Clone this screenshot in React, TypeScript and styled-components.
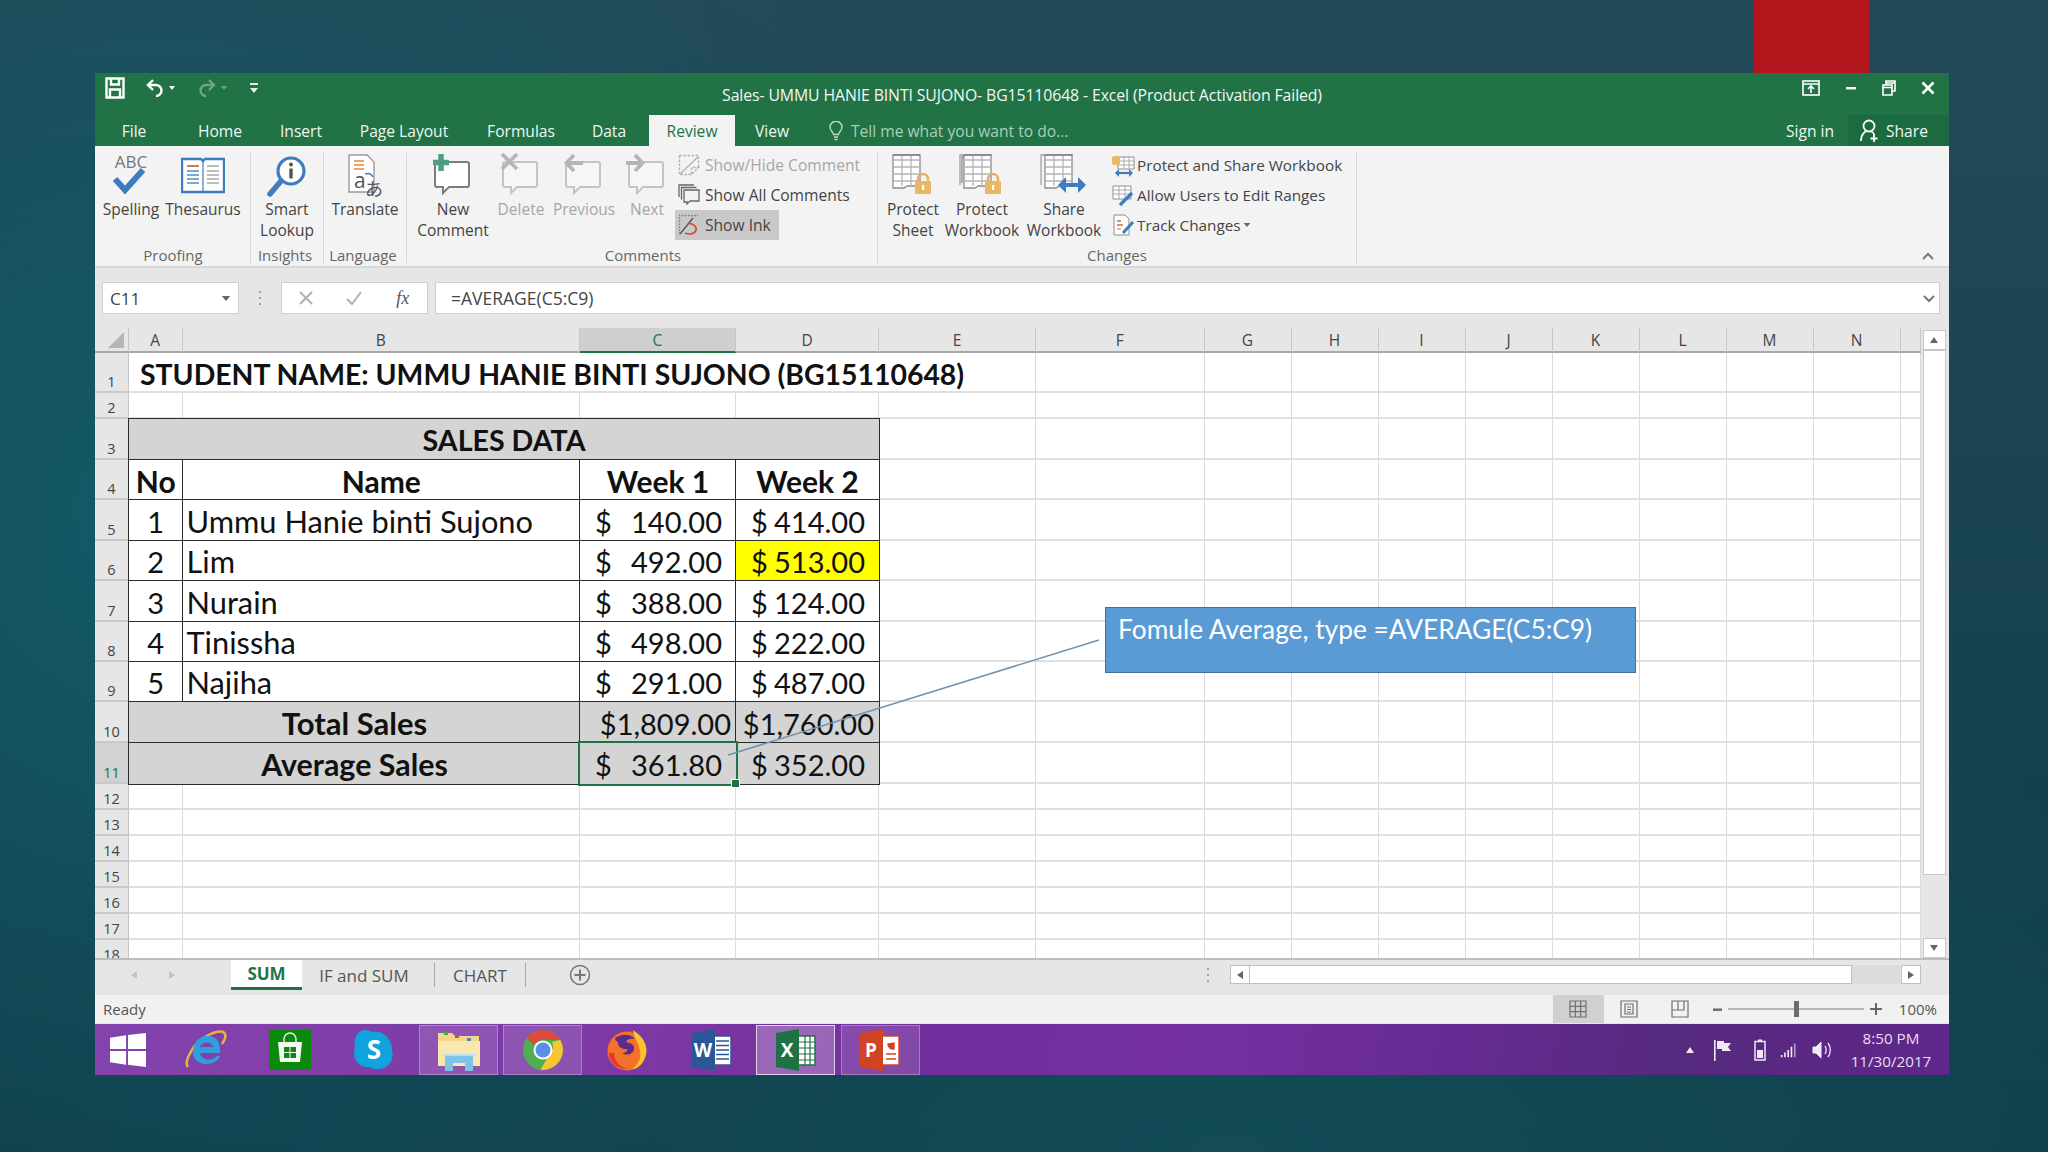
import React from "react";
import styled, { createGlobalStyle } from "styled-components";

const UI_FONT = `"Open Sans", "Noto Sans", sans-serif`;
const SHEET_FONT = `Lato, "Open Sans", sans-serif`;

const GlobalStyle = createGlobalStyle`
  html, body { margin: 0; padding: 0; }
  body {
    width: 2048px;
    height: 1152px;
    overflow: hidden;
    font-family: ${UI_FONT};
    background:
      radial-gradient(ellipse 800px 800px at 8% 45%, #125a66 0%, rgba(18, 90, 102, 0) 100%),
      radial-gradient(ellipse 1200px 500px at 60% 100%, #124c57 0%, rgba(18, 76, 87, 0) 100%),
      linear-gradient(180deg, #234a59 0%, #17424f 55%, #0f3d4a 100%);
  }
`;

const Page = styled.div`
  width: 2048px;
  height: 1152px;
  display: flex;
  flex-direction: column;
`;

const RedBlock = styled.div`
  width: 115px;
  height: 73px;
  margin-left: 1754px;
  background: #b3161c;
  flex: none;
`;

const Window = styled.div`
  width: 1854px;
  height: 1002px;
  margin-left: 95px;
  display: flex;
  flex-direction: column;
  background: #e6e6e6;
  flex: none;
`;

const TitleBar = styled.div`
  height: 42px;
  background: #217346;
  color: #fff;
  display: grid;
  grid-template-columns: 1fr auto 1fr;
  align-items: center;
  flex: none;
`;

const QuickAccess = styled.div`
  display: flex;
  align-items: center;
  gap: 20px;
  padding: 0 0 12px 10px;
`;

const TitleText = styled.div`
  font-size: 15.8px;
  letter-spacing: -0.1px;
  color: #f2f7f4;
  padding-top: 1px;
`;

const WindowControls = styled.div`
  display: flex;
  align-items: center;
  justify-content: flex-end;
  gap: 25px;
  padding: 0 14px 12px 0;
`;

const TabRow = styled.div`
  height: 31px;
  background: #217346;
  display: flex;
  align-items: stretch;
  flex: none;
`;

const Tab = styled.div<{ $w: number; $active?: boolean }>`
  width: ${(p) => p.$w}px;
  display: flex;
  align-items: center;
  justify-content: center;
  font-size: 15.6px;
  color: ${(p) => (p.$active ? "#217346" : "#f0f6f2")};
  background: ${(p) => (p.$active ? "#f3f3f3" : "transparent")};
  flex: none;
`;

const TellMe = styled.div`
  display: flex;
  align-items: center;
  gap: 8px;
  margin-left: 20px;
  font-size: 15.6px;
  color: #a9cfb9;
`;

const SignIn = styled.div`
  margin-left: auto;
  display: flex;
  align-items: center;
  font-size: 15.6px;
  color: #f0f6f2;
  padding-right: 14px;
`;

const ShareTab = styled.div`
  width: 101px;
  display: flex;
  align-items: center;
  gap: 5px;
  padding-left: 11px;
  box-sizing: border-box;
  font-size: 15.6px;
  color: #f0f6f2;
  background: #1c6a3f;
`;

const Ribbon = styled.div`
  height: 122px;
  box-sizing: border-box;
  padding: 7px 0 3px;
  background: #f3f3f3;
  border-bottom: 2px solid #d8d8d8;
  display: flex;
  flex: none;
`;

const Group = styled.div<{ $w: number; $pad?: number }>`
  width: ${(p) => p.$w}px;
  box-sizing: border-box;
  padding-left: ${(p) => p.$pad ?? 0}px;
  border-right: 1px solid #d6d6d6;
  display: flex;
  flex-direction: column;
  flex: none;
`;

const GroupTools = styled.div`
  flex: 1;
  display: flex;
`;

const GroupLabel = styled.div`
  margin-left: -4px;
  text-align: center;
  font-size: 15px;
  line-height: 16px;
  color: #666;
`;

const BigButton = styled.div<{ $w: number; $off?: boolean }>`
  width: ${(p) => p.$w}px;
  flex: none;
  display: flex;
  flex-direction: column;
  align-items: center;
  font-size: 15.5px;
  line-height: 21px;
  text-align: center;
  color: ${(p) => (p.$off ? "#a6a6a6" : "#444")};
  white-space: pre-line;
`;

const IconSlot = styled.div`
  height: 45px;
  display: flex;
  align-items: flex-start;
  justify-content: center;
  margin-bottom: 1px;
`;

const SmallColumn = styled.div`
  display: flex;
  flex-direction: column;
  margin-top: -3px;
`;

const SmallButton = styled.div<{ $off?: boolean; $on?: boolean; $gap?: number; $size?: number }>`
  height: 30px;
  display: flex;
  align-items: center;
  gap: ${(p) => p.$gap ?? 5}px;
  padding: 0 8px 0 3px;
  width: fit-content;
  font-size: ${(p) => p.$size ?? 15.6}px;
  color: ${(p) => (p.$off ? "#a6a6a6" : "#444")};
  background: ${(p) => (p.$on ? "#c9c9c9" : "transparent")};
`;

const Collapse = styled.div`
  margin-left: auto;
  align-self: flex-end;
  padding: 0 15px 2px 0;
  line-height: 0;
`;

const FormulaBar = styled.div`
  height: 60px;
  box-sizing: border-box;
  padding: 14px 9px 0 7px;
  background: #e6e6e6;
  display: flex;
  align-items: flex-start;
  flex: none;
`;

const NameBox = styled.div`
  width: 137px;
  height: 32px;
  box-sizing: border-box;
  background: #fff;
  border: 1px solid #d0d0d0;
  display: flex;
  align-items: center;
  justify-content: space-between;
  padding: 0 7px;
  font-size: 17px;
  color: #444;
`;

const Grip = styled.div`
  width: 42px;
  height: 32px;
  display: flex;
  align-items: center;
  justify-content: center;
`;

const FxBox = styled.div`
  width: 147px;
  height: 32px;
  box-sizing: border-box;
  background: #fff;
  border: 1px solid #d0d0d0;
  margin-right: 7px;
  display: grid;
  grid-template-columns: repeat(3, 1fr);
  align-items: center;
  justify-items: center;
`;

const FxLabel = styled.span`
  font-family: "Liberation Serif", serif;
  font-style: italic;
  font-size: 18px;
  color: #555;
`;

const FormulaInput = styled.div`
  flex: 1;
  height: 32px;
  box-sizing: border-box;
  background: #fff;
  border: 1px solid #d0d0d0;
  display: flex;
  align-items: center;
  justify-content: space-between;
  padding: 0 4px 0 15px;
  font-size: 17.5px;
  color: #444;
`;

const SheetArea = styled.div`
  position: relative;
  height: 630px;
  display: flex;
  flex: none;
  overflow: hidden;
`;

const Sheet = styled.div`
  display: grid;
  grid-template-columns: 34px 53.5px 397.5px 156px 143px 157px 168.5px repeat(8, 87px) 20px;
  grid-template-rows: 25px 40px 26px 41px 40px 41px 40px 41px 40px 40px 41px 41px 26px 26px 26px 26px 26px 26px 26px;
  background: #fff;
  flex: none;
  align-self: flex-start;
`;

const Corner = styled.div`
  background: #e6e6e6;
  border-right: 1px solid #c6c6c6;
  border-bottom: 2px solid #a8a8a8;
  box-sizing: border-box;
  display: flex;
  align-items: flex-end;
  justify-content: flex-end;
  padding: 0 4px 3px 0;
`;

const ColHead = styled.div<{ $on?: boolean }>`
  background: ${(p) => (p.$on ? "#cfcfcf" : "#e6e6e6")};
  border-right: 1px solid #c6c6c6;
  border-bottom: 2px solid ${(p) => (p.$on ? "#217346" : "#a8a8a8")};
  box-sizing: border-box;
  display: flex;
  align-items: center;
  justify-content: center;
  font-size: 15.5px;
  color: ${(p) => (p.$on ? "#217346" : "#444")};
  overflow: hidden;
`;

const RowHead = styled.div<{ $on?: boolean }>`
  background: ${(p) => (p.$on ? "#d2d2d2" : "#e6e6e6")};
  border-right: 1px solid #c6c6c6;
  border-bottom: 2px solid #c9c9c9;
  box-sizing: border-box;
  display: flex;
  align-items: flex-end;
  justify-content: center;
  font-size: 14.5px;
  line-height: 18px;
  color: ${(p) => (p.$on ? "#217346" : "#444")};
  overflow: hidden;
`;

const Cell = styled.div`
  border-right: 1px solid #dadada;
  border-bottom: 2px solid #e0e0e0;
  box-sizing: border-box;
  min-width: 0;
`;

const TitleCell = styled.div`
  grid-column: span 5;
  border-bottom: 2px solid #e0e0e0;
  border-right: 1px solid #dadada;
  box-sizing: border-box;
  padding: 3px 0 0 11px;
  display: flex;
  align-items: center;
  font-family: ${SHEET_FONT};
  font-weight: 700;
  font-size: 28.4px;
  color: #111;
  white-space: nowrap;
`;

const DataCell = styled.div<{
  $span?: number;
  $fill?: string;
  $bold?: boolean;
  $align?: string;
  $indent?: number;
  $size?: number;
}>`
  grid-column: span ${(p) => p.$span ?? 1};
  position: relative;
  z-index: 1;
  box-shadow: 0 0 0 1px #2b2b2b;
  background: ${(p) => p.$fill ?? "#fff"};
  display: flex;
  align-items: center;
  justify-content: ${(p) => p.$align ?? "center"};
  padding-left: ${(p) => p.$indent ?? 0}px;
  padding-top: 1px;
  box-sizing: border-box;
  font-family: ${SHEET_FONT};
  font-weight: ${(p) => (p.$bold ? 700 : 400)};
  font-size: ${(p) => p.$size ?? 30}px;
  color: #111;
  white-space: nowrap;
`;

const Money = styled(DataCell)`
  justify-content: space-between;
  padding: 1px 14px 0 15px;
  font-size: 29px;
`;

const MoneyTotal = styled(DataCell)`
  justify-content: flex-end;
  padding-right: 5px;
  font-size: 29px;
`;

const SelectedCell = styled(Money)`
  z-index: 2;
  box-shadow: 0 0 0 2px #217346;
`;

const FillHandle = styled.div`
  position: absolute;
  right: -4px;
  bottom: -4px;
  width: 7px;
  height: 7px;
  background: #217346;
  border: 1px solid #fff;
`;

const Callout = styled.div`
  position: absolute;
  left: 1010px;
  top: 279px;
  width: 531px;
  height: 66px;
  box-sizing: border-box;
  background: #5b9bd5;
  border: 1px solid #41719c;
  padding: 5px 0 0 12px;
  font-family: ${SHEET_FONT};
  font-size: 26.3px;
  color: #fff;
  z-index: 4;
`;

const Leader = styled.svg`
  position: absolute;
  left: 0;
  top: 0;
  z-index: 3;
  pointer-events: none;
`;

const VScroll = styled.div`
  flex: 1;
  display: flex;
  flex-direction: column;
  padding: 2px 3px 0 2px;
  box-sizing: border-box;
  background: #e6e6e6;
`;

const ScrollButton = styled.div`
  height: 20px;
  background: #fff;
  border: 1px solid #c8c8c8;
  box-sizing: border-box;
  display: flex;
  align-items: center;
  justify-content: center;
  flex: none;
`;

const VThumb = styled.div`
  height: 525px;
  background: #fff;
  border: 1px solid #c8c8c8;
  box-sizing: border-box;
  flex: none;
`;

const VTrack = styled.div`
  flex: 1;
`;

const SheetTabs = styled.div`
  height: 37px;
  background: #e6e6e6;
  border-top: 2px solid #bdbdbd;
  box-sizing: border-box;
  display: flex;
  align-items: stretch;
  flex: none;
`;

const NavArrows = styled.div`
  width: 136px;
  display: flex;
  align-items: center;
  justify-content: center;
  gap: 28px;
  padding: 0 20px 5px 0;
  box-sizing: border-box;
`;

const SheetTab = styled.div<{ $on?: boolean; $w: number; $shift?: number }>`
  width: ${(p) => p.$w}px;
  box-sizing: border-box;
  display: flex;
  align-items: center;
  justify-content: center;
  padding-right: ${(p) => p.$shift ?? 0}px;
  font-size: 17px;
  font-weight: ${(p) => (p.$on ? 700 : 400)};
  color: ${(p) => (p.$on ? "#217346" : "#555")};
  background: ${(p) => (p.$on ? "#fff" : "transparent")};
  border-bottom: ${(p) => (p.$on ? "3px solid #217346" : "0")};
  margin-bottom: 5px;
`;

const TabDivider = styled.div`
  width: 1px;
  margin: 3px 0 8px;
  background: #a8a8a8;
`;

const AddSheet = styled.div`
  margin-left: 43px;
  display: flex;
  align-items: center;
  padding-bottom: 5px;
`;

const HScroll = styled.div`
  margin-left: auto;
  margin-right: 28px;
  display: flex;
  align-items: center;
  padding-bottom: 6px;
`;

const HTrack = styled.div`
  display: flex;
  width: 670px;
  height: 19px;
  margin: 0 1px 0 20px;
  background: #dcdcdc;
`;

const HButton = styled.div`
  width: 20px;
  height: 19px;
  background: #fff;
  border: 1px solid #c0c0c0;
  box-sizing: border-box;
  display: flex;
  align-items: center;
  justify-content: center;
  flex: none;
`;

const HThumb = styled.div`
  width: 602px;
  background: #fff;
  border: 1px solid #c0c0c0;
  border-left: 0;
  box-sizing: border-box;
`;

const StatusBar = styled.div`
  height: 28px;
  background: #f1f1f1;
  display: flex;
  align-items: stretch;
  padding-left: 8px;
  font-size: 15px;
  color: #555;
  flex: none;
`;

const StatusText = styled.div`
  display: flex;
  align-items: center;
`;

const ViewButtons = styled.div`
  margin-left: auto;
  display: flex;
  align-items: stretch;
`;

const ViewButton = styled.div<{ $on?: boolean }>`
  width: 51px;
  display: flex;
  align-items: center;
  justify-content: center;
  background: ${(p) => (p.$on ? "#d0d0d0" : "transparent")};
`;

const Zoomer = styled.div`
  display: flex;
  align-items: center;
  gap: 6px;
  margin-left: 7px;
  padding-right: 12px;
`;

const ZoomSlider = styled.div`
  width: 136px;
  height: 2px;
  background: #b5b5b5;
  position: relative;
`;

const ZoomThumb = styled.div`
  position: absolute;
  left: 66px;
  top: -7px;
  width: 5px;
  height: 16px;
  background: #6b6b6b;
`;

const ZoomText = styled.div`
  margin-left: 11px;
  font-size: 15px;
  color: #555;
`;

const Taskbar = styled.div`
  height: 52px;
  display: flex;
  align-items: stretch;
  gap: 5.3px;
  padding-top: 1px;
  box-sizing: border-box;
  border-top: 1px solid #e9dff0;
  background: linear-gradient(100deg, #8343ac 0%, #7c38a5 30%, #702e9c 45%, #7430a0 60%, #642a90 75%, #552a7e 85%, #5f278a 100%);
  flex: none;
`;

const TaskItem = styled.div<{ $state?: "open" | "active"; $w?: number }>`
  width: ${(p) => p.$w ?? 79}px;
  flex: none;
  display: flex;
  align-items: center;
  justify-content: center;
  box-sizing: border-box;
  background: ${(p) =>
    p.$state === "active"
      ? "rgba(255,255,255,0.26)"
      : p.$state === "open"
        ? "rgba(255,255,255,0.13)"
        : "transparent"};
  border: 1px solid
    ${(p) =>
      p.$state === "active"
        ? "rgba(255,255,255,0.7)"
        : p.$state === "open"
          ? "rgba(255,255,255,0.28)"
          : "transparent"};
`;

const Tray = styled.div`
  margin-left: auto;
  display: flex;
  align-items: center;
  padding-right: 16px;
`;

const TrayIcon = styled.div<{ $w: number }>`
  width: ${(p) => p.$w}px;
  display: flex;
  justify-content: center;
`;

const Clock = styled.div`
  width: 84px;
  text-align: center;
  font-size: 15.2px;
  line-height: 23px;
  color: #e8dff0;
  margin-left: 2px;
`;

/* ---------- icons ---------- */

const BLUE = "#3f7cbf";

const SaveIcon = () => (
  <svg width="20" height="22" viewBox="0 0 20 22" fill="none" stroke="#fff" strokeWidth="2.4">
    <path d="M1.5 1.5h17v19h-17z" />
    <path d="M6 1.5v6h8v-6M5 20.5v-8h10v8" />
  </svg>
);

const UndoIcon = ({ flip, dim }: { flip?: boolean; dim?: boolean }) => (
  <svg width="32" height="20" viewBox="0 0 32 20" fill="none" opacity={dim ? 0.35 : 1}>
    <g transform={flip ? "translate(20,0) scale(-1,1)" : undefined} stroke="#fff" strokeWidth="2.4">
      <path d="M8 2 3 7l5 5" />
      <path d="M3 7h8a5.5 5.5 0 0 1 0 11" />
    </g>
    <path d="M24 8h6l-3 4z" fill="#fff" />
  </svg>
);

const CustomizeIcon = () => (
  <svg width="10" height="14" viewBox="0 0 10 14" fill="#e6f0ea">
    <rect x="1" y="2" width="8" height="2" />
    <path d="M1 7h8l-4 5z" />
  </svg>
);

const RibbonOptionsIcon = () => (
  <svg width="18" height="16" viewBox="0 0 18 16" fill="none" stroke="#fff" strokeWidth="1.6">
    <rect x="1" y="1" width="16" height="14" />
    <path d="M1 4h16M9 13V7M6 9l3-3 3 3" />
  </svg>
);

const MinimizeIcon = () => (
  <svg width="12" height="12" viewBox="0 0 12 12" fill="#fff">
    <rect x="1" y="5" width="10" height="2.4" />
  </svg>
);

const RestoreIcon = () => (
  <svg width="14" height="16" viewBox="0 0 14 16" fill="none" stroke="#fff" strokeWidth="1.6">
    <path d="M1 5h9v10H1zM1 7.5h9M4 5V1h9v10h-3M4 3h9" />
  </svg>
);

const CloseIcon = () => (
  <svg width="14" height="14" viewBox="0 0 14 14" fill="none" stroke="#fff" strokeWidth="2.6">
    <path d="M1.5 1.5l11 11M12.5 1.5l-11 11" />
  </svg>
);

const BulbIcon = () => (
  <svg width="14" height="20" viewBox="0 0 14 20" fill="none" stroke="#bcd9c8" strokeWidth="1.4">
    <path d="M4.5 13.5C4 10.5 1 9.5 1 6.2a6 6 0 0 1 12 0c0 3.3-3 4.3-3.5 7.3zM5 16h4M5.5 18.5h3" />
  </svg>
);

const ShareIcon = () => (
  <svg width="22" height="24" viewBox="0 0 22 24" fill="none" stroke="#fff" strokeWidth="1.8">
    <circle cx="10" cy="7" r="5.5" />
    <path d="M2 22c0-5 2-8 5-10M12 12.500c1.500.5 2.500 1.300 3 2.500M15 15v8M11.500 19.500h7" />
  </svg>
);

const SpellingIcon = () => (
  <svg width="46" height="46" viewBox="0 0 46 46" overflow="visible">
    <text x="23" y="15" textAnchor="middle" fontFamily={UI_FONT} fontSize="17" fill="#777">
      ABC
    </text>
    <path d="M7 26l10 11L35 17" fill="none" stroke={BLUE} strokeWidth="6" />
  </svg>
);

const ThesaurusIcon = () => (
  <svg width="44" height="43" viewBox="0 -3 44 43">
    <path d="M1 3h19l2 2 2-2h19v33H1z" fill="#fff" stroke={BLUE} strokeWidth="2.4" />
    <path d="M22 5v31" stroke={BLUE} strokeWidth="1.2" />
    <path d="M6 10h12" stroke="#d0654a" strokeWidth="1.8" />
    <path d="M6 15h12M6 19h12M6 23h12M6 27h12" stroke="#7ea9d6" strokeWidth="1.8" />
    <path d="M26 10h12M26 15h12M26 19h12M26 23h12M26 27h12" stroke="#a8a8a8" strokeWidth="1.6" />
  </svg>
);

const LookupIcon = () => (
  <svg width="42" height="46" viewBox="0 -2 42 46">
    <circle cx="25" cy="16" r="13" fill="#fff" stroke={BLUE} strokeWidth="3.2" />
    <path d="M15 26 4 39" stroke={BLUE} strokeWidth="5.5" strokeLinecap="round" />
    <circle cx="25" cy="9.5" r="2" fill="#555" />
    <rect x="23.3" y="13.5" width="3.4" height="10" fill="#555" />
  </svg>
);

const TranslateIcon = () => (
  <svg width="44" height="46" viewBox="0 0 44 46" overflow="visible">
    <path d="M6 2h18l7 7v30H6z" fill="#fff" stroke="#9a9a9a" strokeWidth="1.4" />
    <path d="M11 8h10M11 12h10M11 16h10" stroke="#e08a3c" strokeWidth="1.6" />
    <path d="M22 21a6 6 0 0 1 8 3" fill="none" stroke={BLUE} strokeWidth="1.5" />
    <text x="11" y="35" fontFamily={UI_FONT} fontSize="21" fill="#555">
      a
    </text>
    <text x="22" y="43" fontFamily={`"Noto Sans CJK JP", sans-serif`} fontSize="18" fill="#555">
      あ
    </text>
  </svg>
);

const Bubble = ({ dim, white }: { dim?: boolean; white?: boolean }) => (
  <path
    d="M5 9h30a2 2 0 0 1 2 2v21a2 2 0 0 1-2 2H17l-6 6v-6H5a2 2 0 0 1-2-2V11a2 2 0 0 1 2-2z"
    fill={white ? "#fff" : "#f6f6f6"}
    stroke={dim ? "#c4c4c4" : "#7d7d7d"}
    strokeWidth="2"
  />
);

const NewCommentIcon = () => (
  <svg width="42" height="44" viewBox="0 0 42 44">
    <Bubble white />
    <path d="M7 1v17M-1 9.5h16" transform="translate(2,0)" stroke="#4f9e82" strokeWidth="5.5" />
  </svg>
);

const DeleteCommentIcon = () => (
  <svg width="42" height="44" viewBox="0 0 42 44">
    <Bubble dim />
    <path d="M2 1l15 15M17 1 2 16" stroke="#b5b5b5" strokeWidth="3.6" />
  </svg>
);

const PrevCommentIcon = () => (
  <svg width="42" height="44" viewBox="0 0 42 44">
    <Bubble dim />
    <path d="M20 10H5M11 2 3.5 10l7.500 8" fill="none" stroke="#b5b5b5" strokeWidth="3.8" />
  </svg>
);

const NextCommentIcon = () => (
  <svg width="42" height="44" viewBox="0 0 42 44">
    <Bubble dim />
    <path d="M0 10h15M9 2l7.5 8L9 18" fill="none" stroke="#b5b5b5" strokeWidth="3.8" />
  </svg>
);

const ShowHideIcon = () => (
  <svg width="22" height="22" viewBox="0 0 22 22" fill="none" stroke="#b0b0b0" strokeWidth="1.3">
    <path d="M1.5 1.5h19v12M1.5 1.5v19h12l7-7h-7v7" strokeDasharray="2.5 1.5" />
    <path d="M2 20 20 3" />
  </svg>
);

const ShowAllIcon = () => (
  <svg width="22" height="22" viewBox="0 0 22 22" fill="none" stroke="#666" strokeWidth="1.3">
    <path d="M1 13V1h15M3.5 15.5V3.5h15M6 18V6h15v11H12l-3 3v-2z" />
  </svg>
);

const ShowInkIcon = () => (
  <svg width="22" height="22" viewBox="0 0 22 22" fill="none">
    <path d="M1.5 20V1.5H20" stroke="#777" strokeWidth="1.3" strokeDasharray="1.5 1.5" />
    <path d="M2 20 15 4" stroke="#555" strokeWidth="1.3" />
    <path d="M10 9c5 1 9 3 8 7s-7 5-11 3" stroke="#d2492a" strokeWidth="1.6" />
  </svg>
);

const SheetGrid = ({ x = 3 }: { x?: number }) => (
  <g fill="none" stroke="#8c8c8c" strokeWidth="1.3">
    <path d={`M${x} 2h27v31H${x + 14}l-3 2H${x}z`} fill="#fff" />
    <path d={`M${x} 7h27M${x} 14h27M${x} 21h27M${x} 28h27M${x + 9} 2v31M${x + 18} 2v31`} stroke="#b5b5b5" />
    <path d={`M${x} 2h27`} strokeWidth="2" />
  </g>
);

const Lock = ({ x, y }: { x: number; y: number }) => (
  <g transform={`translate(${x},${y})`}>
    <path d="M3 9V6a5 5 0 0 1 10 0v3" fill="none" stroke="#e3b25f" strokeWidth="2.4" />
    <rect x="0" y="8" width="16" height="13" rx="1" fill="#eab766" />
    <rect x="7" y="12" width="2.2" height="5" fill="#fff" />
  </g>
);

const ProtectSheetIcon = () => (
  <svg width="44" height="44" viewBox="0 0 44 44">
    <SheetGrid x={2} />
    <Lock x={24} y={20} />
  </svg>
);

const ProtectWorkbookIcon = () => (
  <svg width="46" height="44" viewBox="0 0 46 44">
    <path d="M3 30V4h3" fill="none" stroke="#8c8c8c" strokeWidth="1.3" />
    <path d="M1 32V2h32" fill="none" stroke="#a0a0a0" strokeWidth="1.3" />
    <SheetGrid x={5} />
    <Lock x={26} y={20} />
  </svg>
);

const ShareWorkbookIcon = () => (
  <svg width="48" height="44" viewBox="0 0 48 44">
    <path d="M1 32V2h32" fill="none" stroke="#a0a0a0" strokeWidth="1.3" />
    <SheetGrid x={5} />
    <path d="M21 32h22" stroke={BLUE} strokeWidth="4" />
    <path d="M26 24l-8 8 8 8zM38 24l8 8-8 8z" fill={BLUE} />
  </svg>
);

const ProtectShareSmall = () => (
  <svg width="24" height="24" viewBox="0 0 24 24" fill="none">
    <path d="M7 4h16v12H7z" fill="#fff" stroke="#8c8c8c" />
    <path d="M7 8h16M7 12h16M13 4v12M18 4v12" stroke="#aaa" />
    <rect x="1" y="3" width="8" height="9" rx="2" fill="#eab766" />
    <path d="M6 20h14" stroke={BLUE} strokeWidth="2.2" />
    <path d="M8 16l-4 4 4 4zM18 16l4 4-4 4z" fill={BLUE} />
  </svg>
);

const AllowEditSmall = () => (
  <svg width="24" height="24" viewBox="0 0 24 24" fill="none">
    <path d="M2 3h18v13H2z" fill="#fff" stroke="#8c8c8c" />
    <path d="M2 7h18M2 11h18M8 3v13M14 3v13" stroke="#aaa" />
    <path d="M21 10 9 22" stroke={BLUE} strokeWidth="3.2" />
  </svg>
);

const TrackSmall = () => (
  <svg width="24" height="24" viewBox="0 0 24 24" fill="none">
    <path d="M3 2h11l4 4v16H3z" fill="#fff" stroke="#8c8c8c" />
    <path d="M6 8h4M6 12h6" stroke="#d0654a" strokeWidth="1.5" />
    <path d="M6 16h4" stroke="#e0a040" strokeWidth="1.5" />
    <path d="M22 9 12 20" stroke={BLUE} strokeWidth="3" />
  </svg>
);

const Caret = ({ color = "#666", size = 6 }: { color?: string; size?: number }) => (
  <svg width={size * 2} height={size} viewBox="0 0 12 6" fill={color}>
    <path d="M1 0h10L6 6z" />
  </svg>
);

const Chevron = ({ up }: { up?: boolean }) => (
  <svg width="12" height="9" viewBox="0 0 12 9" fill="none" stroke="#777" strokeWidth="2">
    <path d={up ? "M1 7l5-5 5 5" : "M1 2l5 5 5-5"} />
  </svg>
);

const Triangle = ({ dir, color = "#666" }: { dir: "up" | "down" | "left" | "right"; color?: string }) => {
  const d = { up: "M1 8h8L5 2z", down: "M1 2h8L5 8z", left: "M8 1v8L2 5z", right: "M2 1v8l6-4z" }[dir];
  return (
    <svg width="10" height="10" viewBox="0 0 10 10" fill={color}>
      <path d={d} />
    </svg>
  );
};

const DotsIcon = () => (
  <svg width="4" height="16" viewBox="0 0 4 16" fill="#a0a0a0">
    <rect x="1" y="1" width="2" height="2" />
    <rect x="1" y="7" width="2" height="2" />
    <rect x="1" y="13" width="2" height="2" />
  </svg>
);

const WinLogo = () => (
  <svg width="36" height="36" viewBox="0 0 38 36" fill="#fff">
    <path d="M0 5l17-2.500V17H0zM19 2.200 38 0v17H19zM0 19h17v14.500L0 31zM19 19h19v17l-19-2.300z" />
  </svg>
);

const IeLogo = () => (
  <svg width="42" height="40" viewBox="0 0 42 40" fill="none">
    <path d="M3 37C-1 33 6 17 17 9 27 2 38 -1 40 4c1.500 3-1 7-3 10" stroke="#e8b33c" strokeWidth="2.6" />
    <path
      d="M35 23H15c.5 7 11 9 17 3h3c-5 12-28 11-27-5C9 9 18 5 25 6c7 1 11 8 10 17zM15 17h13c-1-6-11-6-13 0z"
      fill="#2fa0dd"
      fillRule="evenodd"
    />
  </svg>
);

const StoreLogo = () => (
  <svg width="42" height="40" viewBox="0 0 42 40">
    <rect width="42" height="40" fill="#0a8a0a" />
    <path d="M15 12V9a6 6 0 0 1 12 0v3" fill="none" stroke="#e6f2e6" strokeWidth="1.4" />
    <path d="M9 12h24l-2 20H11z" fill="#f4f9f4" />
    <path d="M15 17h5.500v5H15zM21.500 17H27v5h-5.500zM15 23h5.500v5H15zM21.500 23H27v5h-5.500z" fill="#0a8a0a" />
  </svg>
);

const SkypeLogo = () => (
  <svg width="42" height="42" viewBox="0 0 42 42">
    <path d="M12 1c3 0 5 1 7 2 11-2 21 7 20 19 3 9-5 19-15 18-2 0-5 0-7-2C7 40-2 30 2 19 0 10 4 1 12 1z" fill="#0fa3e0" />
    <text x="21" y="30" textAnchor="middle" fontFamily={UI_FONT} fontWeight="700" fontSize="26" fill="#fff">
      S
    </text>
  </svg>
);

const FolderLogo = () => (
  <svg width="44" height="42" viewBox="0 0 44 42">
    <path d="M1 4h14l3 3h24v28H1z" fill="#f2d68a" />
    <path d="M1 12h42v25H1z" fill="#f8e7ae" />
    <rect x="7" y="3" width="4" height="3" fill="#4aa84a" />
    <rect x="18" y="6" width="4" height="3" fill="#d84a3a" />
    <rect x="30" y="9" width="4" height="3" fill="#4a86d8" />
    <path d="M8 42V29c0-2 1-3 3-3h22c2 0 3 1 3 3v13h-8v-8H16v8z" fill="#7fc3e8" />
    <path d="M6 26h32" stroke="#b5e0f5" strokeWidth="2" />
  </svg>
);

const ChromeLogo = () => (
  <svg width="40" height="40" viewBox="0 0 40 40">
    <circle cx="20" cy="20" r="20" fill="#4caf50" />
    <path d="M20 0a20 20 0 0 1 17.300 10H20a10 10 0 0 0-8.700 5L3.600 8.500A20 20 0 0 1 20 0z" fill="#dd4b3e" />
    <path d="M37.300 10A20 20 0 0 1 17.500 39.800l9-15.800A10 10 0 0 0 29 12z" fill="#f7c531" />
    <circle cx="20" cy="20" r="9.500" fill="#fff" />
    <circle cx="20" cy="20" r="7.500" fill="#5a8fe8" />
  </svg>
);

const FirefoxLogo = () => (
  <svg width="42" height="42" viewBox="0 0 42 42">
    <circle cx="21" cy="22" r="19.500" fill="#f4712a" />
    <path d="M27 1c10 6 15 16 13 24-2 9-8 15-14 15 8-5 10-14 7-22-1-5-5-9-6-17z" fill="#f9c22e" />
    <path d="M9 9c5-4 15-5 20 1-5-1-8 0-9 3 3 1 7 1 8 5 1 6-6 10-12 6 4 0 6-2 5-4-5 1-10-3-9-7-2-1-3-2-3-4z" fill="#5a2a8c" />
    <path d="M3 24c0 9 8 16 18 16-7-2-13-8-13-16z" fill="#e5352e" />
  </svg>
);

const OfficeLogo = ({ letter, color }: { letter: string; color: string }) => (
  <svg width="46" height="42" viewBox="0 0 46 42">
    <path d="M25 7h17v29H25z" fill="#fff" stroke={color} strokeWidth="1.5" />
    {letter === "X" ? (
      <path d="M25 13h17M25 19h17M25 25h17M25 31h17M32 7v29M37 7v29" stroke={color} strokeWidth="1.2" />
    ) : letter === "W" ? (
      <path d="M27 12h13M27 16.500h13M27 21h13M27 25.500h13M27 30h13" stroke={color} strokeWidth="1.7" />
    ) : (
      <path d="M29 30h10M29 25h10M31 15a5 5 0 0 0 6 5v-6z" stroke={color} fill={color} strokeWidth="1.4" />
    )}
    <path d="M3 4 26 0v42L3 38z" fill={color} />
    <text x="14" y="28" textAnchor="middle" fontFamily={UI_FONT} fontWeight="700" fontSize="19" fill="#fff">
      {letter}
    </text>
  </svg>
);

const NormalViewIcon = () => (
  <svg width="18" height="18" viewBox="0 0 18 18" fill="none" stroke="#707070" strokeWidth="1.2">
    <path d="M1 1h16v16H1zM1 6.300h16M1 11.600h16M6.300 1v16M11.600 1v16" />
  </svg>
);

const PageViewIcon = () => (
  <svg width="18" height="18" viewBox="0 0 18 18" fill="none" stroke="#707070" strokeWidth="1.2">
    <path d="M1 1h16v16H1zM5 4h8v10H5zM7 7h4M7 9.500h4M7 12h4" />
  </svg>
);

const BreakViewIcon = () => (
  <svg width="18" height="18" viewBox="0 0 18 18" fill="none" stroke="#707070" strokeWidth="1.2">
    <path d="M1 1h16v16H1zM1 10h12V1M7 1v9" />
  </svg>
);

const FlagIcon = () => (
  <svg width="20" height="22" viewBox="0 0 20 22" fill="#f1e9f5">
    <rect x="1" y="1" width="1.6" height="21" />
    <path d="M4 2h7v2h7l-3 4 3 4H9v-2H4z" />
  </svg>
);

const BatteryIcon = () => (
  <svg width="12" height="22" viewBox="0 0 12 22">
    <rect x="1" y="2.500" width="10" height="18.500" fill="none" stroke="#f1e9f5" strokeWidth="1.5" />
    <rect x="4" y="0.500" width="4" height="2" fill="#f1e9f5" />
    <rect x="3" y="11" width="6" height="8" fill="#f1e9f5" />
  </svg>
);

const SignalIcon = () => (
  <svg width="18" height="16" viewBox="0 0 22 18" fill="#f1e9f5">
    <path d="M1 15h2v3H1zM5 12h2v6H5zM9 9h2v9H9zM13 5h2v13h-2z" />
    <path d="M17 1h2v17h-2z" opacity="0.6" />
  </svg>
);

const VolumeIcon = () => (
  <svg width="22" height="20" viewBox="0 0 22 20" fill="none" stroke="#f1e9f5">
    <path d="M1 7h3l5-5v16l-5-5H1z" fill="#f1e9f5" />
    <path d="M13 6c1.500 2.500 1.500 5.500 0 8M16 3c3 4 3 10 0 14" strokeWidth="1.3" />
  </svg>
);

/* ---------- sheet data ---------- */

const COLUMNS = ["A", "B", "C", "D", "E", "F", "G", "H", "I", "J", "K", "L", "M", "N", ""];

const PEOPLE = [
  ["1", "Ummu Hanie binti Sujono", "140.00", "414.00"],
  ["2", "Lim", "492.00", "513.00"],
  ["3", "Nurain", "388.00", "124.00"],
  ["4", "Tinissha", "498.00", "222.00"],
  ["5", "Najiha", "291.00", "487.00"],
];

const GREY = "#d4d4d4";

const blanks = (row: number, from: number) =>
  Array.from({ length: COLUMNS.length - from }, (_, i) => <Cell key={`${row}-${from + i}`} />);

const rowCells = (row: number) => {
  if (row === 1)
    return [
      <TitleCell key="t">STUDENT NAME: UMMU HANIE BINTI SUJONO (BG15110648)</TitleCell>,
      ...blanks(row, 5),
    ];
  if (row === 3)
    return [
      <DataCell key="h" $span={4} $fill={GREY} $bold $size={28.6}>
        SALES DATA
      </DataCell>,
      ...blanks(row, 4),
    ];
  if (row === 4)
    return [
      ...["No", "Name", "Week 1", "Week 2"].map((t) => (
        <DataCell key={t} $bold>
          {t}
        </DataCell>
      )),
      ...blanks(row, 4),
    ];
  if (row >= 5 && row <= 9) {
    const [n, name, w1, w2] = PEOPLE[row - 5];
    const fill = row === 6 ? "#ffff00" : undefined;
    return [
      <DataCell key="n" $size={29}>
        {n}
      </DataCell>,
      <DataCell key="name" $align="flex-start" $indent={4} $size={30.8}>
        {name}
      </DataCell>,
      <Money key="w1">
        <span>$</span>
        <span>{w1}</span>
      </Money>,
      <Money key="w2" $fill={fill}>
        <span>$</span>
        <span>{w2}</span>
      </Money>,
      ...blanks(row, 4),
    ];
  }
  if (row === 10)
    return [
      <DataCell key="l" $span={2} $fill={GREY} $bold $size={31}>
        Total Sales
      </DataCell>,
      <MoneyTotal key="c" $fill={GREY}>
        $1,809.00
      </MoneyTotal>,
      <MoneyTotal key="d" $fill={GREY}>
        $1,760.00
      </MoneyTotal>,
      ...blanks(row, 4),
    ];
  if (row === 11)
    return [
      <DataCell key="l" $span={2} $fill={GREY} $bold $size={30.4}>
        Average Sales
      </DataCell>,
      <SelectedCell key="c" $fill={GREY}>
        <span>$</span>
        <span>361.80</span>
        <FillHandle />
      </SelectedCell>,
      <Money key="d" $fill={GREY}>
        <span>$</span>
        <span>352.00</span>
      </Money>,
      ...blanks(row, 4),
    ];
  return blanks(row, 0);
};

const ROWS = Array.from({ length: 18 }, (_, i) => i + 1);

const LARGE_COMMENTS = [
  { w: 56, label: "Delete", icon: <DeleteCommentIcon /> },
  { w: 70, label: "Previous", icon: <PrevCommentIcon /> },
  { w: 56, label: "Next", icon: <NextCommentIcon /> },
];

const App = () => (
  <Page>
    <GlobalStyle />
    <RedBlock />
    <Window>
      <TitleBar>
        <QuickAccess>
          <SaveIcon />
          <UndoIcon />
          <UndoIcon flip dim />
          <CustomizeIcon />
        </QuickAccess>
        <TitleText>Sales- UMMU HANIE BINTI SUJONO- BG15110648 - Excel (Product Activation Failed)</TitleText>
        <WindowControls>
          <RibbonOptionsIcon />
          <MinimizeIcon />
          <RestoreIcon />
          <CloseIcon />
        </WindowControls>
      </TitleBar>

      <TabRow>
        <Tab $w={78}>File</Tab>
        <Tab $w={94}>Home</Tab>
        <Tab $w={68}>Insert</Tab>
        <Tab $w={138}>Page Layout</Tab>
        <Tab $w={96}>Formulas</Tab>
        <Tab $w={80}>Data</Tab>
        <Tab $w={86} $active>
          Review
        </Tab>
        <Tab $w={74}>View</Tab>
        <TellMe>
          <BulbIcon />
          Tell me what you want to do...
        </TellMe>
        <SignIn>Sign in</SignIn>
        <ShareTab>
          <ShareIcon />
          Share
        </ShareTab>
      </TabRow>

      <Ribbon>
        <Group $w={156} $pad={5}>
          <GroupTools>
            <BigButton $w={62}>
              <IconSlot>
                <SpellingIcon />
              </IconSlot>
              Spelling
            </BigButton>
            <BigButton $w={82}>
              <IconSlot>
                <ThesaurusIcon />
              </IconSlot>
              Thesaurus
            </BigButton>
          </GroupTools>
          <GroupLabel>Proofing</GroupLabel>
        </Group>
        <Group $w={73}>
          <GroupTools>
            <BigButton $w={72}>
              <IconSlot>
                <LookupIcon />
              </IconSlot>
              {"Smart\nLookup"}
            </BigButton>
          </GroupTools>
          <GroupLabel>Insights</GroupLabel>
        </Group>
        <Group $w={83}>
          <GroupTools>
            <BigButton $w={82}>
              <IconSlot>
                <TranslateIcon />
              </IconSlot>
              Translate
            </BigButton>
          </GroupTools>
          <GroupLabel>Language</GroupLabel>
        </Group>
        <Group $w={471} $pad={6}>
          <GroupTools>
            <BigButton $w={80}>
              <IconSlot>
                <NewCommentIcon />
              </IconSlot>
              {"New\nComment"}
            </BigButton>
            {LARGE_COMMENTS.map((b) => (
              <BigButton key={b.label} $w={b.w} $off>
                <IconSlot>{b.icon}</IconSlot>
                {b.label}
              </BigButton>
            ))}
            <SmallColumn>
              <SmallButton $off>
                <ShowHideIcon />
                Show/Hide Comment
              </SmallButton>
              <SmallButton>
                <ShowAllIcon />
                Show All Comments
              </SmallButton>
              <SmallButton $on>
                <ShowInkIcon />
                Show Ink
              </SmallButton>
            </SmallColumn>
          </GroupTools>
          <GroupLabel>Comments</GroupLabel>
        </Group>
        <Group $w={479} $pad={4}>
          <GroupTools>
            <BigButton $w={62}>
              <IconSlot>
                <ProtectSheetIcon />
              </IconSlot>
              {"Protect\nSheet"}
            </BigButton>
            <BigButton $w={76}>
              <IconSlot>
                <ProtectWorkbookIcon />
              </IconSlot>
              {"Protect\nWorkbook"}
            </BigButton>
            <BigButton $w={88}>
              <IconSlot>
                <ShareWorkbookIcon />
              </IconSlot>
              {"Share\nWorkbook"}
            </BigButton>
            <SmallColumn>
              <SmallButton $gap={2} $size={15.3}>
                <ProtectShareSmall />
                Protect and Share Workbook
              </SmallButton>
              <SmallButton $gap={2} $size={15.3}>
                <AllowEditSmall />
                Allow Users to Edit Ranges
              </SmallButton>
              <SmallButton $gap={2} $size={15.3}>
                <TrackSmall />
                Track Changes
                <Caret size={4} />
              </SmallButton>
            </SmallColumn>
          </GroupTools>
          <GroupLabel>Changes</GroupLabel>
        </Group>
        <Collapse>
          <Chevron up />
        </Collapse>
      </Ribbon>

      <FormulaBar>
        <NameBox>
          C11
          <Caret color="#666" size={5} />
        </NameBox>
        <Grip>
          <DotsIcon />
        </Grip>
        <FxBox>
          <svg width="16" height="16" viewBox="0 0 16 16" fill="none" stroke="#b0b0b0" strokeWidth="2">
            <path d="M2 2l12 12M14 2 2 14" />
          </svg>
          <svg width="18" height="16" viewBox="0 0 18 16" fill="none" stroke="#b0b0b0" strokeWidth="2">
            <path d="M2 9l5 5L16 2" />
          </svg>
          <FxLabel>fx</FxLabel>
        </FxBox>
        <FormulaInput>
          =AVERAGE(C5:C9)
          <Chevron />
        </FormulaInput>
      </FormulaBar>

      <SheetArea>
        <Sheet>
          <Corner>
            <svg width="16" height="16" viewBox="0 0 16 16" fill="#b5b5b5">
              <path d="M16 0v16H0z" />
            </svg>
          </Corner>
          {COLUMNS.map((c, i) => (
            <ColHead key={i} $on={c === "C"}>
              {c}
            </ColHead>
          ))}
          {ROWS.map((r) => (
            <React.Fragment key={r}>
              <RowHead $on={r === 11}>{r}</RowHead>
              {rowCells(r)}
            </React.Fragment>
          ))}
        </Sheet>
        <VScroll>
          <ScrollButton>
            <Triangle dir="up" />
          </ScrollButton>
          <VThumb />
          <VTrack />
          <ScrollButton>
            <Triangle dir="down" />
          </ScrollButton>
        </VScroll>
        <Leader width="1854" height="630" viewBox="0 0 1854 630">
          <path d="M633 427 1004 312" stroke="#6f93b3" strokeWidth="1.5" fill="none" />
        </Leader>
        <Callout>Fomule Average, type =AVERAGE(C5:C9)</Callout>
      </SheetArea>

      <SheetTabs>
        <NavArrows>
          <Triangle dir="left" color="#c4c4c4" />
          <Triangle dir="right" color="#c4c4c4" />
        </NavArrows>
        <SheetTab $on $w={71}>
          SUM
        </SheetTab>
        <SheetTab $w={132} $shift={8}>
          IF and SUM
        </SheetTab>
        <TabDivider />
        <SheetTab $w={90}>CHART</SheetTab>
        <TabDivider />
        <AddSheet>
          <svg width="22" height="22" viewBox="0 0 22 22" fill="none" stroke="#777" strokeWidth="1.5">
            <circle cx="11" cy="11" r="9.5" />
            <path d="M11 5.500v11M5.500 11h11" strokeWidth="2" />
          </svg>
        </AddSheet>
        <HScroll>
          <DotsIcon />
          <HTrack>
            <HButton>
              <Triangle dir="left" />
            </HButton>
            <HThumb />
          </HTrack>
          <HButton>
            <Triangle dir="right" />
          </HButton>
        </HScroll>
      </SheetTabs>

      <StatusBar>
        <StatusText>Ready</StatusText>
        <ViewButtons>
          <ViewButton $on>
            <NormalViewIcon />
          </ViewButton>
          <ViewButton>
            <PageViewIcon />
          </ViewButton>
          <ViewButton>
            <BreakViewIcon />
          </ViewButton>
        </ViewButtons>
        <Zoomer>
          <svg width="9" height="9" viewBox="0 0 9 9" fill="#666">
            <rect y="3.5" width="9" height="2.4" />
          </svg>
          <ZoomSlider>
            <ZoomThumb />
          </ZoomSlider>
          <svg width="12" height="12" viewBox="0 0 12 12" fill="#666">
            <path d="M5 0h2v5h5v2H7v5H5V7H0V5h5z" />
          </svg>
          <ZoomText>100%</ZoomText>
        </Zoomer>
      </StatusBar>

      <Taskbar>
        <TaskItem $w={66}>
          <WinLogo />
        </TaskItem>
        <TaskItem>
          <IeLogo />
        </TaskItem>
        <TaskItem>
          <StoreLogo />
        </TaskItem>
        <TaskItem>
          <SkypeLogo />
        </TaskItem>
        <TaskItem $state="open">
          <FolderLogo />
        </TaskItem>
        <TaskItem $state="open">
          <ChromeLogo />
        </TaskItem>
        <TaskItem>
          <FirefoxLogo />
        </TaskItem>
        <TaskItem>
          <OfficeLogo letter="W" color="#2b5797" />
        </TaskItem>
        <TaskItem $state="active">
          <OfficeLogo letter="X" color="#1f7244" />
        </TaskItem>
        <TaskItem $state="open">
          <OfficeLogo letter="P" color="#d04423" />
        </TaskItem>
        <Tray>
          <TrayIcon $w={30}>
            <Triangle dir="up" color="#f1e9f5" />
          </TrayIcon>
          <TrayIcon $w={36}>
            <FlagIcon />
          </TrayIcon>
          <TrayIcon $w={38}>
            <BatteryIcon />
          </TrayIcon>
          <TrayIcon $w={20}>
            <SignalIcon />
          </TrayIcon>
          <TrayIcon $w={48}>
            <VolumeIcon />
          </TrayIcon>
          <Clock>
            8:50 PM
            <br />
            11/30/2017
          </Clock>
        </Tray>
      </Taskbar>
    </Window>
  </Page>
);

export default App;
